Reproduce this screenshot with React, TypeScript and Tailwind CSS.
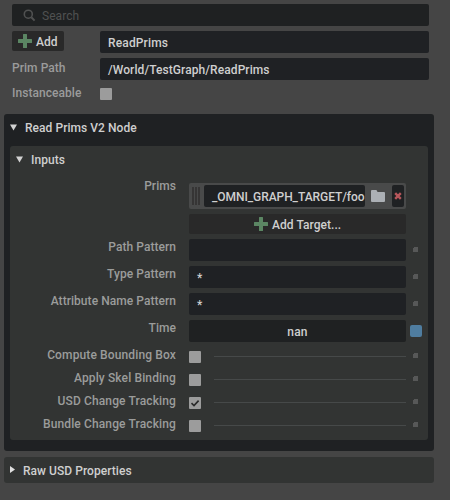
import React from "react";

const Plus = () => (
  <svg width="14" height="14" viewBox="0 0 14 14" className="shrink-0">
    <path d="M5.5 0h3q.5 0 .5.5V5h4.500q.5 0 .5.5v3q0 .5-.5.5H9v4.500q0 .5-.5.5h-3q-.5 0-.5-.5V9H.5Q0 9 0 8.500v-3Q0 5 .5 5H5V.5Q5 0 5.500 0z" fill="#5b8663" />
  </svg>
);

const Check = ({ on = false }: { on?: boolean }) => (
  <div className="h-3 w-3 shrink-0 rounded-[1px] bg-[#9c9c9c]">
    {on && (
      <svg width="12" height="12" viewBox="0 0 12 12">
        <path d="M2.500 6.200L5 8.600L9.600 3.600" fill="none" stroke="#292929" strokeWidth="1.600" />
      </svg>
    )}
  </div>
);

const Dot = () => (
  <svg width="5" height="5" viewBox="0 0 5 5" className="shrink-0" shapeRendering="crispEdges">
    <path d="M1 0h4v5H0V1h1z" fill="#575858" />
  </svg>
);

const Label = ({ children }: { children: React.ReactNode }) => (
  <div className="w-[166px] shrink-0 text-right leading-4 text-[#9b9c9b]">{children}</div>
);

const TextRow = ({ label, value }: { label: string; value: string }) => (
  <div className="mb-[5px] flex h-[22px]">
    <Label>{label}</Label>
    <div className="ml-[13px] w-[217px] rounded-[2px] bg-[#1f2124] pl-2 leading-6">{value}</div>
    <div className="ml-[7px] pt-2">
      <Dot />
    </div>
  </div>
);

const CheckRow = ({ label, on }: { label: string; on?: boolean }) => (
  <div className="flex h-[23px] tracking-[0.130px]">
    <Label>{label}</Label>
    <div className="ml-[13px] pt-1">
      <Check on={on} />
    </div>
    <div className="mt-[9px] ml-[13px] h-px w-[192px] bg-[#464949]" />
    <div className="mt-1.5 ml-[7px]">
      <Dot />
    </div>
  </div>
);

export default function App() {
  return (
    <div className="h-[500px] w-[450px] overflow-hidden bg-[#454545] pt-1 font-['Roboto',sans-serif] text-[12px] font-medium tracking-[0.050px] whitespace-nowrap text-[#cfcfcf]">
      <div className="mr-[21px] ml-3 flex h-[22px] items-center rounded-[2px] bg-[#1f2122] pl-[11px] font-normal text-[#505151]">
        <svg width="13" height="13" viewBox="0 0 13 13" fill="none" stroke="#505151">
          <circle cx="5.300" cy="5.200" r="4" strokeWidth="1.600" />
          <path d="M8.300 8.300L11.600 11.600" strokeWidth="2" />
        </svg>
        <span className="ml-1.5 pt-px">Search</span>
      </div>

      <div className="mt-[5px] mr-[21px] ml-3 flex h-[22px]">
        <div className="flex h-5 w-[52px] items-center rounded-[2px] bg-[#292929] pl-1.5">
          <Plus />
          <span className="ml-1 pt-0.5">Add</span>
        </div>
        <div className="ml-9 flex-1 rounded-[2px] bg-[#1f2124] pl-2 leading-6 tracking-[0.150px]">ReadPrims</div>
      </div>
      <div className="mt-[5px] mr-[21px] ml-3 flex h-[22px]">
        <div className="w-[88px] leading-5 text-[#9b9b9b]">Prim Path</div>
        <div className="flex-1 rounded-[2px] bg-[#1f2124] pl-2 leading-6 tracking-[0.080px]">/World/TestGraph/ReadPrims</div>
      </div>
      <div className="mt-[5px] ml-3 flex h-[29px]">
        <div className="w-[88px] leading-4 text-[#9b9b9b]">Instanceable</div>
        <div className="pt-[3px]">
          <Check />
        </div>
      </div>

      <section className="mr-4 ml-1 h-[337px] rounded-[3px] bg-[#1f2123] px-1.5">
        <div className="flex h-8">
          <svg width="7" height="7" viewBox="0 0 7 7" className="mt-2.5">
            <path d="M0 .5h7L3.500 6.500z" fill="#d2d2d2" />
          </svg>
          <span className="ml-2 leading-7">Read Prims V2 Node</span>
        </div>
        <div className="h-[294px] rounded-[3px] bg-[#323433]">
          <div className="flex h-[30px] pl-1.5">
            <svg width="7" height="7" viewBox="0 0 7 7" className="mt-2.5">
              <path d="M0 .5h7L3.500 6.500z" fill="#d2d2d2" />
            </svg>
            <span className="ml-2 leading-7">Inputs</span>
          </div>

          <div className="flex h-[38px]">
            <div className="pt-0.5">
              <Label>Prims</Label>
            </div>
            <div className="mt-[7px] ml-[13px] flex h-[26px] w-[217px] rounded-[2px] bg-[#494a4a] py-0.5 pr-0.5 pl-[3px]">
              <div className="mt-0.5 flex h-[18px] gap-px">
                <div className="w-0.5 bg-[#363535]" />
                <div className="w-0.5 bg-[#363535]" />
                <div className="w-0.5 bg-[#363535]" />
              </div>
              <div className="ml-1 w-[161px] rounded-[2px] bg-[#1f2123] pl-2 leading-6 tracking-[-0.060px]">
                _OMNI_GRAPH_TARGET/foo
              </div>
              <svg width="14" height="12" viewBox="0 0 14 12" className="mt-[5px] ml-1.5 shrink-0">
                <path d="M1 0h4q.6 0 .8.600L6.500 2H13q1 0 1 1v8q0 1-1 1H1q-1 0-1-1V1q0-1 1-1z" fill="#acb0b5" />
              </svg>
              <div className="ml-[7px] flex w-3 shrink-0 items-center justify-center rounded-[2px] bg-[#1f2123]">
                <svg width="8" height="8" viewBox="0 0 8 8">
                  <path d="M1.200 1.200L6.800 6.800M6.800 1.200L1.200 6.800" stroke="#b7575c" strokeWidth="2.400" />
                </svg>
              </div>
            </div>
          </div>

          <div className="mb-[5px] ml-[179px] flex h-5 w-[217px] items-center rounded-[2px] bg-[#292929] pl-[65px]">
            <Plus />
            <span className="ml-1 pt-0.5">Add Target...</span>
          </div>

          <TextRow label="Path Pattern" value="" />
          <TextRow label="Type Pattern" value="*" />
          <TextRow label="Attribute Name Pattern" value="*" />
          <div className="mb-[5px] flex h-[22px]">
            <Label>Time</Label>
            <div className="ml-[13px] w-[217px] rounded-[2px] bg-[#1f2122] text-center leading-6 tracking-[0.250px]">nan</div>
            <div className="mt-[5px] ml-1 h-3 w-3 rounded-[2px] bg-[#4f7da0]" />
          </div>

          <CheckRow label="Compute Bounding Box" />
          <CheckRow label="Apply Skel Binding" />
          <CheckRow label="USD Change Tracking" on />
          <CheckRow label="Bundle Change Tracking" />
        </div>
      </section>

      <section className="mt-1.5 mr-4 ml-1 flex h-[26px] rounded-[3px] bg-[#323433] pl-1.5">
        <svg width="5" height="7" viewBox="0 0 5 7" className="mt-[9px]">
          <path d="M0 0L5 3.500L0 7z" fill="#e0e0e0" />
        </svg>
        <span className="ml-2 leading-7">Raw USD Properties</span>
      </section>
    </div>
  );
}
